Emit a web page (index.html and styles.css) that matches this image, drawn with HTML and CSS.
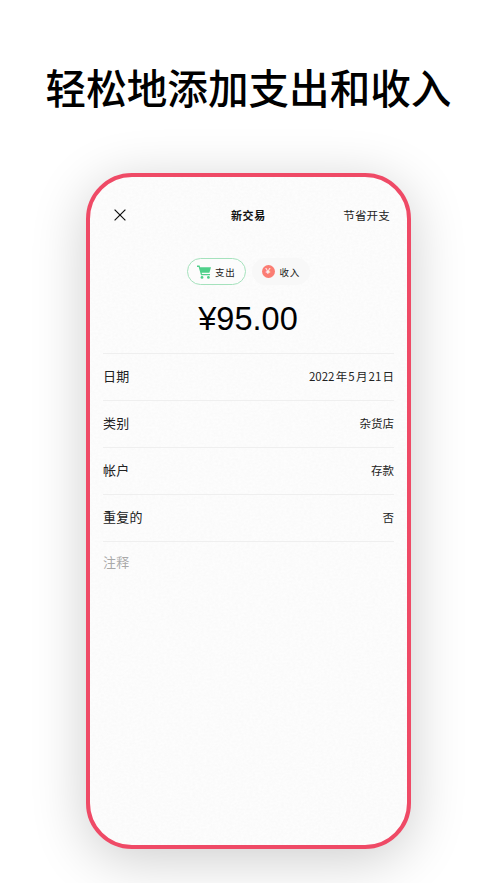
FILE: index.html
```html
<!DOCTYPE html>
<html lang="zh">
<head>
<meta charset="utf-8">
<title>新交易</title>
<link rel="stylesheet" href="styles.css">
</head>
<body>
<h1 class="headline">轻松地添加支出和收入</h1>
<div class="phone">
  <svg class="paper" width="100%" height="100%" aria-hidden="true">
    <filter id="grain"><feTurbulence type="fractalNoise" baseFrequency="0.35 0.5" numOctaves="3" seed="4"/><feColorMatrix values="0 0 0 0 0.45  0 0 0 0 0.45  0 0 0 0 0.45  0.5 0 0 0 -0.12"/></filter>
    <rect width="100%" height="100%" filter="url(#grain)" opacity="0.16"/>
  </svg>
  <header class="topbar">
    <svg class="close" viewBox="0 0 12 12" width="12" height="12"><path d="M.6.6l10.8 10.8M11.4.6L.6 11.4" fill="none" stroke="#111" stroke-width="1.2"/></svg>
    <span class="title">新交易</span>
    <span class="save">节省开支</span>
  </header>
  <div class="tabs">
    <div class="tab active">
      <svg class="cart" viewBox="0 0 14 14" width="14" height="14"><path d="M0 .6h2.6l.5 1.6H14l-1.6 5.6H4.7l.3 1.2h8v1.3H4L1.7 1.9H0z" fill="#4fd08a"/><circle cx="5" cy="12.4" r="1.4" fill="#4fd08a"/><circle cx="11.4" cy="12.4" r="1.4" fill="#4fd08a"/></svg>
      <span class="tab-text">支出</span>
    </div>
    <div class="tab">
      <span class="coin">¥</span>
      <span class="tab-text">收入</span>
    </div>
  </div>
  <div class="amount">¥95.00</div>
  <ul class="rows">
    <li class="row"><span class="label">日期</span><span class="value">2022 年 5 月 21 日</span></li>
    <li class="row"><span class="label">类别</span><span class="value">杂货店</span></li>
    <li class="row"><span class="label">帐户</span><span class="value">存款</span></li>
    <li class="row"><span class="label">重复的</span><span class="value">否</span></li>
  </ul>
  <div class="note">注释</div>
</div>
</body>
</html>
```
FILE: styles.css
```css
* { box-sizing: border-box; }
html, body { margin: 0; height: 883px; overflow: hidden; }
body {
  width: 497px;
  background: #fff;
  font-family: "Noto Sans CJK SC", "Liberation Sans", sans-serif;
  color: #111;
  display: flex;
  flex-direction: column;
  align-items: center;
}
.headline {
  margin: 60px 0 0;
  font-size: 40.6px;
  line-height: 54px;
  font-weight: 500;
  color: #000;
  white-space: nowrap;
}
.phone {
  margin-top: 59px;
  width: 325px;
  height: 676px;
  border: 4px solid #ef4a66;
  border-radius: 46px;
  background: #fdfdfd;
  box-shadow: 0 10px 55px rgba(0,0,0,.2);
  padding: 0 13px;
  position: relative;
  overflow: hidden;
}
.paper { position: absolute; inset: 0; pointer-events: none; }
.topbar {
  display: flex;
  align-items: center;
  justify-content: space-between;
  height: 20px;
  margin-top: 28px;
  padding: 0 4px 0 11px;
  position: relative;
}
.title {
  position: absolute;
  left: 128px;
  font-size: 11px;
  font-weight: 700;
  letter-spacing: .6px;
}
.save { font-size: 11.5px; letter-spacing: .2px; color: #222; }
.tabs {
  display: flex;
  justify-content: center;
  gap: 6px;
  margin-top: 33px;
  position: relative;
}
.tab {
  height: 27px;
  border-radius: 14px;
  display: flex;
  align-items: center;
  font-size: 9.5px;
  padding: 0 9px;
  gap: 5px;
  background: #f8f8f8;
  border: 1px solid #f8f8f8;
  white-space: nowrap;
}
.tab-text { letter-spacing: .7px; color: #222; }
.tab.active {
  border-color: #a5e2bd;
  background: #fcfcfc;
  gap: 4px;
}
.coin {
  width: 13px;
  height: 13px;
  border-radius: 50%;
  background: #fb7d73;
  color: #fff;
  font-size: 9px;
  line-height: 13px;
  text-align: center;
  font-family: "Liberation Sans", sans-serif;
}
.amount {
  margin-top: 11px;
  text-align: center;
  font-family: "Liberation Sans", sans-serif;
  font-size: 32.5px;
  line-height: 46px;
  color: #000;
  padding-right: 1px;
  position: relative;
}
.rows { list-style: none; margin: 11px 0 0; padding: 0; position: relative; }
.row {
  height: 47px;
  display: flex;
  align-items: center;
  justify-content: space-between;
  border-top: 1px solid #efefef;
  padding-bottom: 3px;
}
.label { font-size: 13px; color: #222; letter-spacing: .3px; }
.value { font-size: 11.5px; color: #222; word-spacing: -1.4px; }
.note {
  border-top: 1px solid #efefef;
  padding-top: 10px;
  font-size: 13px;
  line-height: 20px;
  color: #a9a9a9;
  letter-spacing: .3px;
  position: relative;
}
```
